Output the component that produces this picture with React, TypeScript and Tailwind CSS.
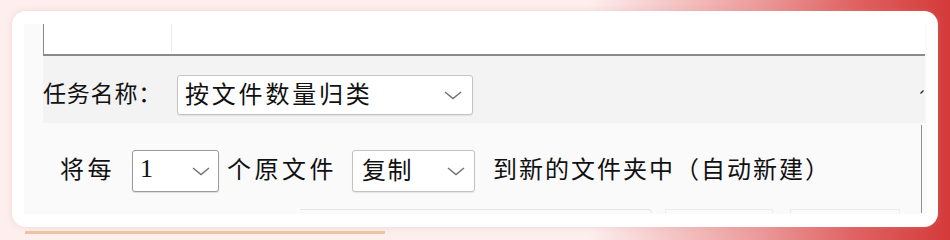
import React from 'react';

const font = { fontFamily: '"Microsoft YaHei", "Noto Sans CJK SC", "Noto Sans", sans-serif' };

const Chevron = () => (
  <svg width="18" height="9" viewBox="0 0 18 9" className="shrink-0">
    <polyline points="1,1 9,7.5 17,1" fill="none" stroke="#707070" strokeWidth="1.4" />
  </svg>
);

const Combo = ({ children, className }: { children: React.ReactNode; className: string }) => (
  <div className={`flex items-center justify-between bg-white rounded-[3px] ${className}`}>
    {children}
  </div>
);

const App: React.FC = () => {
  return (
    <div
      className="w-[950px] h-[240px] overflow-hidden pt-[11px] pl-[12px] bg-[linear-gradient(90deg,#fcefee_0%,#fcefee_62%,#ec9a9a_80%,#e06262_90%,#d43a3a_100%)] text-[#111]"
      style={font}
    >
      <div className="w-[926px] h-[216px] rounded-[14px] bg-white pt-[13px] pb-[13px] pl-[12px] pr-[11px] shadow-[0_0_6px_rgba(215,140,140,0.25)]">
        <div className="h-full bg-[#fafafa] flex flex-col">
          {/* upper panel */}
          <div className="ml-[19px] mr-[2px] bg-[#f3f3f3] flex flex-col">
            <div className="h-[32px] bg-white border-l border-b-2 border-[#8a8a8a] flex">
              <div className="w-[128px] h-[28px] border-r border-[#ededed]" />
            </div>
            <div className="h-[67px] flex items-start pt-[19px]">
              <span className="w-[134px] text-[23px] leading-[34px] tracking-[0.8px]">任务名称：</span>
              <Combo className="w-[296px] h-[40px] border border-[#c4c4c4] shadow-[0_1px_1px_rgba(0,0,0,0.08)] pl-[7px] pr-[10px]">
                <span className="text-[24px] leading-[32px] pb-[5px] tracking-[2.8px] whitespace-nowrap">按文件数量归类</span>
                <Chevron />
              </Combo>
              <svg width="4" height="4" viewBox="0 0 4 4" className="ml-auto mt-[15px] mr-[1px]">
                <line x1="0.5" y1="3.5" x2="3.5" y2="0.5" stroke="#222" strokeWidth="1.3" />
              </svg>
            </div>
          </div>
          {/* lower group */}
          <div className="flex-1 mt-[2px] mb-[1px] mr-[5px] border-r-[1.5px] border-[#8f8f8f] flex flex-col">
            <div className="flex items-center pt-[25px] pl-[36px]">
              <span className="w-[72px] text-[24px] leading-[34px] pb-[6px] tracking-[3.5px]">将每</span>
              <Combo className="w-[87px] h-[42px] border border-[#9a9a9a] shadow-[0_1px_1px_rgba(0,0,0,0.12)] pl-[7px] pr-[8px]">
                <span className="text-[26px] leading-[30px] pb-[4px]" style={{ fontFamily: '"Liberation Serif", serif' }}>1</span>
                <Chevron />
              </Combo>
              <span className="ml-[8px] w-[125px] text-[24px] leading-[34px] pb-[6px] tracking-[3.5px]">个原文件</span>
              <Combo className="w-[123px] h-[42px] border border-[#c2c2c2] shadow-[0_1px_1px_rgba(0,0,0,0.08)] pl-[9px] pr-[9px]">
                <span className="text-[24px] leading-[32px] pb-[5px] tracking-[1.5px]">复制</span>
                <Chevron />
              </Combo>
              <span className="ml-[18px] text-[24px] leading-[34px] pb-[6px] tracking-[2px] whitespace-nowrap">到新的文件夹中（自动新建）</span>
            </div>
            <div className="mt-auto h-[4px] flex">
              <div className="ml-[276px] w-[352px] border-t border-r border-[#e4e4e4] rounded-tr-[6px]" />
              <div className="ml-[13px] w-[108px] border-t border-x border-[#ececec]" />
              <div className="ml-[17px] w-[110px] border-t border-x border-[#ececec]" />
            </div>
          </div>
        </div>
      </div>
      <div className="mt-[4px] ml-[13px] w-[360px] h-[3px] bg-[#eec39e]" />
    </div>
  );
};

export default App;
